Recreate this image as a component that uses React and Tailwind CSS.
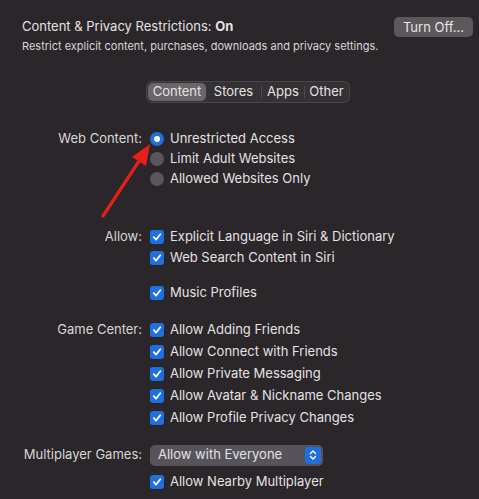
import React from "react";

const Check = () => (
    <span className="w-[14px] h-[14px] rounded-[3px] bg-[#1f6fe0] flex items-center justify-center shrink-0">
        <svg width="10" height="10" viewBox="0 0 10 10" fill="none">
            <path d="M1.8 5.2 L4 7.6 L8.3 2.3" stroke="white" strokeWidth="1.8" strokeLinecap="round" strokeLinejoin="round" />
        </svg>
    </span>
);

const Radio = ({ on }) =>
    on ? (
        <span className="w-[14px] h-[14px] rounded-full bg-[#1f6fe0] flex items-center justify-center shrink-0">
            <span className="w-[6px] h-[6px] rounded-full bg-white" />
        </span>
    ) : (
        <span className="w-[14px] h-[14px] rounded-full bg-[#59555a] shrink-0" />
    );

const Row = ({ label, h, children }) => (
    <div className={`grid grid-cols-[142px_1fr] gap-x-2 items-center ${h}`}>
        <div className="text-right text-[13px] text-[#d8d6d8]">{label}</div>
        <div className="flex items-center gap-[6px] text-[13px] text-[#e4e2e4]">{children}</div>
    </div>
);

const App = () => {
    return (
        <div
            className="relative w-[479px] h-[499px] bg-[#2a2629] overflow-hidden"
            style={{ fontFamily: "Inter, 'Liberation Sans', sans-serif" }}
        >
            <div className="flex items-start justify-between pl-[22px] pr-[6px] pt-[17px]">
                <div className="pt-[1px]">
                    <div className="text-[13px] leading-[16px] text-[#e4e2e4]">
                        Content &amp; Privacy Restrictions: <span className="font-bold">On</span>
                    </div>
                    <div className="text-[11px] leading-[14px] mt-[5px] text-[#d8d6d8]">
                        Restrict explicit content, purchases, downloads and privacy settings.
                    </div>
                </div>
                <button className="h-[20px] w-[79px] rounded-[5px] bg-[#5b575a] text-[13px] text-[#e8e6e8] leading-none">
                    Turn Off…
                </button>
            </div>

            <div className="ml-[146px] mt-[28px] w-[204px] h-[22px] flex items-center rounded-[6px] bg-[#353134] border border-[#47434a] text-[13px] text-[#e4e2e4] px-[1px]">
                <div className="w-[58px] h-[18px] rounded-[5px] bg-[#69656a] flex items-center justify-center">Content</div>
                <div className="w-[55px] flex items-center justify-center">Stores</div>
                <div className="w-px h-[12px] bg-[#4d494c]" />
                <div className="w-[42px] flex items-center justify-center">Apps</div>
                <div className="w-px h-[12px] bg-[#4d494c]" />
                <div className="flex-1 flex items-center justify-center">Other</div>
            </div>

            <div className="mt-[26px]">
                <Row label="Web Content:" h="h-[20px]">
                    <Radio on />
                    <span>Unrestricted Access</span>
                </Row>
                <Row label="" h="h-[20px]">
                    <Radio />
                    <span>Limit Adult Websites</span>
                </Row>
                <Row label="" h="h-[20px]">
                    <Radio />
                    <span>Allowed Websites Only</span>
                </Row>
            </div>

            <div className="mt-[37px]">
                <Row label="Allow:" h="h-[21px]">
                    <Check />
                    <span>Explicit Language in Siri &amp; Dictionary</span>
                </Row>
                <Row label="" h="h-[21px]">
                    <Check />
                    <span>Web Search Content in Siri</span>
                </Row>
                <div className="mt-[15px]">
                    <Row label="" h="h-[20px]">
                        <Check />
                        <span>Music Profiles</span>
                    </Row>
                </div>
            </div>

            <div className="mt-[16px]">
                <Row label="Game Center:" h="h-[22px]">
                    <Check />
                    <span>Allow Adding Friends</span>
                </Row>
                <Row label="" h="h-[22px]">
                    <Check />
                    <span>Allow Connect with Friends</span>
                </Row>
                <Row label="" h="h-[22px]">
                    <Check />
                    <span>Allow Private Messaging</span>
                </Row>
                <Row label="" h="h-[22px]">
                    <Check />
                    <span>Allow Avatar &amp; Nickname Changes</span>
                </Row>
                <Row label="" h="h-[22px]">
                    <Check />
                    <span>Allow Profile Privacy Changes</span>
                </Row>
            </div>

            <div className="mt-[15px]">
                <Row label="Multiplayer Games:" h="h-[22px]">
                    <div className="w-[173px] h-[21px] rounded-[5px] bg-[#57535a] flex items-center justify-between pl-[8px] pr-[2px]">
                        <span>Allow with Everyone</span>
                        <span className="w-[16px] h-[17px] rounded-[4px] bg-[#1f6fe0] flex items-center justify-center">
                            <svg width="8" height="12" viewBox="0 0 8 12" fill="none">
                                <path d="M1.5 4.5 L4 2 L6.5 4.5 M1.5 7.5 L4 10 L6.5 7.5" stroke="white" strokeWidth="1.4" strokeLinecap="round" strokeLinejoin="round" />
                            </svg>
                        </span>
                    </div>
                </Row>
                <div className="mt-[6px]">
                    <Row label="" h="h-[20px]">
                        <Check />
                        <span>Allow Nearby Multiplayer</span>
                    </Row>
                </div>
            </div>

            <svg className="absolute left-0 top-0 pointer-events-none" width="479" height="499">
                <line x1="103" y1="216" x2="141" y2="158" stroke="#e61e1c" strokeWidth="3.2" strokeLinecap="round" />
                <polygon points="150,144 132,157 146,166" fill="#e61e1c" />
            </svg>
        </div>
    );
};

export default App;
